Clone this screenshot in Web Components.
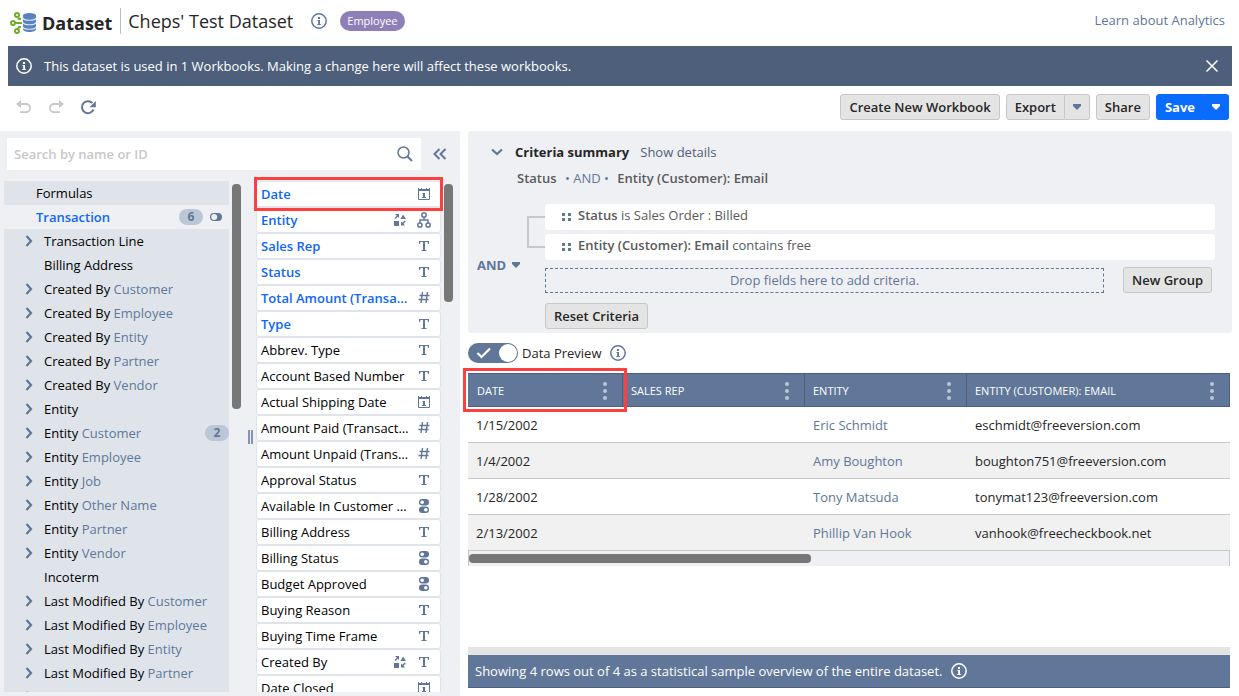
<!DOCTYPE html>
<html lang="en">
<head>
<meta charset="utf-8">
<meta name="viewport" content="width=device-width, initial-scale=1">
<title>Cheps' Test Dataset</title>
<style>
  :root {
    --slate: #607799;
    --slate-dark: #4d5f7b;
    --panel: #eff0f4;
    --tree: #dfe4eb;
    --link: #0d67f8;
    --grey: #c8c8c8;
  }
  html, body { height: 100%; }
  body {
    margin: 0;
    overflow: hidden;
    background: #fff;
    color: #262626;
    font: 13px/20px "Open Sans", "Noto Sans", sans-serif;
  }
</style>
</head>
<body>
<dataset-app></dataset-app>

<script>
const ICONS = {
  logo: [28, 24, `<g fill="none" stroke="#6fae2c" stroke-width="2"><circle cx="8" cy="4" r="2"/><circle cx="4" cy="12" r="2"/><circle cx="8" cy="20" r="2"/><path d="M9 6l1 2h2M6 12h7M9 18l1-2h2"/></g><g fill="#5b80bf"><path d="M14 4h13v14c0 2-3 3-6.500 3S14 20 14 18z"/><ellipse cx="20.500" cy="4.500" rx="6.500" ry="2.500"/></g><path d="M14 7c1 3 12 3 13 0M14 11.500c1 3 12 3 13 0M14 16c1 3 12 3 13 0" fill="none" stroke="#dbe6f7" stroke-width="1.200"/>`],
  info: [18, 18, `<circle cx="9" cy="9" r="7.200" fill="none" stroke="currentColor" stroke-width="1.500"/><path d="M8 5h2v2H8zM7.500 8H10v4h.8v1H7.300v-1h.9V9h-.7z" fill="currentColor"/>`],
  close: [14, 14, `<path d="M1.500 1.500l11 11M12.500 1.500l-11 11" fill="none" stroke="currentColor" stroke-width="1.600"/>`],
  undo: [16, 16, `<path d="M4 5h6a4 4 0 0 1 0 8.200H4" fill="none" stroke="currentColor" stroke-width="1.800"/><path d="M0 5l5-4v8z" fill="currentColor"/>`],
  redo: [16, 16, `<path d="M12 5H6a4 4 0 0 0 0 8.200h6" fill="none" stroke="currentColor" stroke-width="1.800"/><path d="M16 5l-5-4v8z" fill="currentColor"/>`],
  refresh: [16, 16, `<path d="M13.500 10.500A6 6 0 1 1 12.300 4" fill="none" stroke="currentColor" stroke-width="2"/><path d="M15.800 2v6.200H9.500z" fill="currentColor"/>`],
  caret: [8, 6, `<path d="M0 0h8v2L4 6 0 2z" fill="currentColor"/>`],
  search: [16, 16, `<circle cx="6.500" cy="6.500" r="5.500" fill="none" stroke="currentColor" stroke-width="1.500"/><path d="M10.500 10.500l4.500 4.500" stroke="currentColor" stroke-width="2"/>`],
  collapse: [14, 12, `<path d="M6.500 1l-5 5 5 5M12.500 1l-5 5 5 5" fill="none" stroke="currentColor" stroke-width="2"/>`],
  right: [8, 12, `<path d="M1.500 1l4.500 5-4.500 5" fill="none" stroke="currentColor" stroke-width="2.200"/>`],
  down: [12, 8, `<path d="M1 1.500l5 4.500 5-4.500" fill="none" stroke="currentColor" stroke-width="2.200"/>`],
  half: [12, 8, `<rect width="12" height="8" rx="4" fill="currentColor"/><circle cx="4.200" cy="4" r="3" fill="#eff0f4"/>`],
  calendar: [14, 14, `<path d="M1.500 3.500v9h11v-9" fill="none" stroke="currentColor"/><path d="M1 1h1v1h2V1h1v1h4V1h1v1h2V1h1v3H1zM6 6h2v4h1v1H5v-1h1V7H5z" fill="currentColor"/>`],
  text: [14, 14, `<path d="M2 2h10v3h-1L10.500 3H8v8h1.500v1h-5v-1H6V3H3.500L3 5H2z" fill="currentColor"/>`],
  number: [14, 14, `<path d="M5.500 1L4 12M10.500 1L9 12M2.500 4.500h10M1.500 8.500h10" fill="none" stroke="currentColor" stroke-width="1.400"/>`],
  option: [14, 14, `<rect x="2" y="0" width="10" height="6.500" rx="3.200" fill="currentColor"/><rect x="2" y="7.500" width="10" height="6.500" rx="3.200" fill="currentColor"/><circle cx="5.200" cy="3.200" r="1.800" fill="#fff"/><circle cx="8.800" cy="10.700" r="1.800" fill="#fff"/>`],
  shapes: [14, 14, `<path d="M1 8h5v5H1zM10 1.500l3 4.500H7.500zM2 1h4v4L4.700 3.700 2.500 6l-1-1 2.300-2.200zM12.800 8.500l-2.300 2.300L12 12.500H8v-4l1.400 1.300L11.700 7.500z" fill="currentColor"/>`],
  org: [14, 16, `<g fill="none" stroke="currentColor" stroke-width="1.500"><circle cx="7" cy="3" r="2.200"/><circle cx="2.900" cy="13" r="2.100"/><circle cx="11.100" cy="13" r="2.100"/><path d="M7 5v3M3 11V8h8v3"/></g>`],
  drag: [10, 10, `<path d="M1 1h3v3H1zM7 1h3v3H7zM1 6h3v3H1zM7 6h3v3H7z" fill="currentColor"/>`],
  dots: [4, 18, `<g fill="currentColor"><circle cx="2" cy="2" r="2"/><circle cx="2" cy="9" r="2"/><circle cx="2" cy="16" r="2"/></g>`],
  check: [16, 12, `<path d="M1.500 6l4 4L14 1.500" fill="none" stroke="currentColor" stroke-width="2.200"/>`],
  grip: [6, 14, `<path d="M1 0v14M4 0v14" stroke="currentColor" stroke-width="1.500"/>`]
};

class DsElement extends HTMLElement {
  connectedCallback() {
    if (!this.shadowRoot) {
      this.attachShadow({ mode: 'open' });
      this.shadowRoot.innerHTML = `<style>*, ::before { box-sizing: border-box; } ${this.css()}</style>${this.html()}`;
    }
  }
}

// <ds-icon name="...">
class DsIcon extends DsElement {
  css() { return `:host { display: inline-flex; flex: none; } svg { display: block; }`; }
  html() {
    const [w, h, body] = ICONS[this.getAttribute('name')];
    return `<svg width="${w}" height="${h}" viewBox="0 0 ${w} ${h}" aria-hidden="true">${body}</svg>`;
  }
}

// Plain button, or a split button when "split" is set
class DsButton extends DsElement {
  css() {
    return `
      :host { display: inline-flex; flex: none; }
      button {
        height: 26px; margin: 0; padding: 0 8px;
        border: 1px solid var(--grey); border-radius: 3px;
        background: #e4e4e4; color: #262626; cursor: pointer;
        font: 600 13px/20px "Open Sans", sans-serif; white-space: nowrap;
      }
      .more { display: flex; align-items: center; border-left: 0; border-radius: 0 3px 3px 0; color: var(--slate); }
      :host([split]) .main { border-radius: 3px 0 0 3px; }
      :host([primary]) button { background: #0a6cff; border-color: #0a6cff; color: #fff; font-weight: 700; }
    `;
  }
  html() {
    const more = this.hasAttribute('split')
      ? `<button class="more" type="button" aria-label="More options"><ds-icon name="caret"></ds-icon></button>` : '';
    return `<button class="main" type="button"><slot></slot></button>${more}`;
  }
}

// Red frame drawn around whatever positioned box holds it
class HighlightFrame extends DsElement {
  css() { return `:host { position: absolute; inset: var(--frame-inset, -5px -3px); z-index: 5; border: 3px solid #fc4040; pointer-events: none; }`; }
  html() { return ''; }
}

class ScrollThumb extends DsElement {
  css() {
    return `:host { display: block; flex: none; padding-top: 3px; }
      div { width: 9px; height: ${this.getAttribute('size')}px; border-radius: 4px; background: #777; }`;
  }
  html() { return `<div></div>`; }
}

class AppHeader extends DsElement {
  css() {
    return `
      :host { display: flex; flex: none; height: 46px; padding: 0 14px 0 9px; }
      .brand { display: flex; align-items: center; gap: 5px; height: 46px; font-size: 18px; font-weight: 700; }
      .title { display: flex; align-items: center; height: 42px; flex: 1; color: #262626; }
      .title::before { content: ""; width: 1px; height: 26px; margin: 0 7px 0 8px; background: #b4bfd0; }
      h1 { margin: 0 17px 0 0; font-size: 18px; font-weight: 400; }
      ds-icon { color: var(--slate); }
      .tag { margin-left: 12px; padding: 0 7px; border-radius: 10px; background: #8f7fb9; color: #fff; font-size: 11px; }
      a { line-height: 41px; color: var(--slate); text-decoration: none; }
    `;
  }
  html() {
    return `
      <div class="brand"><ds-icon name="logo"></ds-icon><span>Dataset</span></div>
      <div class="title"><h1>Cheps' Test Dataset</h1><ds-icon name="info"></ds-icon><span class="tag">Employee</span></div>
      <a href="#">Learn about Analytics</a>
    `;
  }
}

class InfoBanner extends DsElement {
  css() {
    return `
      :host { display: flex; flex: none; align-items: center; gap: 11px; height: 40px; margin: 0 7px 0 8px; padding: 0 12px 0 7px; background: var(--slate-dark); color: #fff; }
      p { flex: 1; margin: 0; }
      button { display: flex; padding: 1px; border: 0; background: none; color: inherit; }
    `;
  }
  html() {
    return `<ds-icon name="info"></ds-icon><p><slot></slot></p>
      <button type="button" aria-label="Close"><ds-icon name="close"></ds-icon></button>`;
  }
}

class ToolBar extends DsElement {
  css() {
    return `
      :host { display: flex; flex: none; align-items: center; gap: 6px; height: 45px; padding: 0 10px 4px 16px; }
      .history { display: flex; flex: 1; gap: 16px; }
      .history button { display: flex; padding: 0; border: 0; background: none; color: var(--slate); }
      .history button:disabled { color: var(--grey); }
    `;
  }
  html() {
    return `
      <div class="history">
        <button type="button" disabled aria-label="Undo"><ds-icon name="undo"></ds-icon></button>
        <button type="button" disabled aria-label="Redo"><ds-icon name="redo"></ds-icon></button>
        <button type="button" aria-label="Refresh"><ds-icon name="refresh"></ds-icon></button>
      </div>
      <ds-button>Create New Workbook</ds-button>
      <ds-button split>Export</ds-button>
      <ds-button>Share</ds-button>
      <ds-button split primary>Save</ds-button>
    `;
  }
}

class SearchBox extends DsElement {
  css() {
    return `
      :host { display: flex; align-items: center; height: 32px; }
      label { display: flex; flex: 1; align-items: center; height: 32px; padding: 0 8px 0 7px; background: #fff; color: var(--slate); }
      input { flex: 1; min-width: 0; padding: 0; border: 0; outline: 0; background: none; color: #262626; font: 13px/20px "Open Sans", sans-serif; }
      input::placeholder { color: var(--grey); font-weight: 600; }
      button { display: flex; padding: 0; margin: 0 13px 0 12px; border: 0; background: none; color: var(--slate); }
    `;
  }
  html() {
    return `
      <label><input type="text" placeholder="Search by name or ID" aria-label="Search by name or ID"><ds-icon name="search"></ds-icon></label>
      <button type="button" aria-label="Collapse panel"><ds-icon name="collapse"></ds-icon></button>
    `;
  }
}

// One record type: attributes label, via, count, branch, root, active
class TreeRow extends DsElement {
  css() {
    return `
      :host { display: flex; align-items: center; height: 24px; padding-left: 21px; background: var(--tree); color: #000; white-space: nowrap; }
      :host([active]) { background: var(--panel); color: var(--link); }
      :host([active]) .name { font-weight: 600; }
      .twist { display: flex; width: 19px; color: var(--slate); }
      :host([root]) .twist { width: 11px; }
      .name { flex: 1; }
      .via { color: var(--slate); }
      .count { width: 24px; border-radius: 8px; background: #bcc7d6; color: var(--slate); font-size: 12px; font-weight: 700; line-height: 16px; text-align: center; }
      .only { display: flex; padding: 0 7px; color: var(--slate); }
    `;
  }
  html() {
    const at = name => this.getAttribute(name);
    return `
      <span class="twist">${this.hasAttribute('branch') ? '<ds-icon name="right"></ds-icon>' : ''}</span>
      <span class="name">${at('label')}${at('via') ? ` <span class="via">${at('via')}</span>` : ''}</span>
      ${at('count') ? `<span class="count">${at('count')}</span>` : ''}
      ${this.hasAttribute('active') ? '<span class="only"><ds-icon name="half"></ds-icon></span>' : ''}
    `;
  }
}

class RecordTree extends DsElement {
  css() { return `:host { display: block; flex: 1; min-width: 0; overflow: hidden; background: var(--tree); }`; }
  html() {
    const rows = [
      ['Transaction Line'], ['Billing Address', '', 'leaf'],
      ['Created By', 'Customer'], ['Created By', 'Employee'], ['Created By', 'Entity'],
      ['Created By', 'Partner'], ['Created By', 'Vendor'],
      ['Entity'], ['Entity', 'Customer', '', 2], ['Entity', 'Employee'], ['Entity', 'Job'],
      ['Entity', 'Other Name'], ['Entity', 'Partner'], ['Entity', 'Vendor'],
      ['Incoterm', '', 'leaf'],
      ['Last Modified By', 'Customer'], ['Last Modified By', 'Employee'], ['Last Modified By', 'Entity'],
      ['Last Modified By', 'Partner']
    ];
    return `
      <tree-row root label="Formulas"></tree-row>
      <tree-row root active label="Transaction" count="6"></tree-row>
      ${rows.map(([label, via = '', leaf = '', count = '']) =>
        `<tree-row label="${label}" via="${via}" count="${count}" ${leaf ? '' : 'branch'}></tree-row>`).join('')}
      <tree-row label="" branch></tree-row>
    `;
  }
}

class FieldRow extends DsElement {
  css() {
    return `
      :host { position: relative; display: flex; align-items: center; height: 26px; padding: 0 9px 0 4px; border: 1px solid var(--tree); border-radius: 3px; background: #fff; color: #000; }
      :host([used]) { color: var(--link); }
      :host([used]) .name { font-weight: 600; }
      .name { flex: 0 1 148px; overflow: hidden; text-overflow: ellipsis; white-space: nowrap; }
      .types { display: flex; flex: 1 0 auto; justify-content: flex-end; align-items: center; gap: 10px; color: var(--slate); }
    `;
  }
  html() {
    const icons = this.getAttribute('types').split(' ').map(t => `<ds-icon name="${t}"></ds-icon>`).join('');
    return `<span class="name">${this.getAttribute('label')}</span><span class="types">${icons}</span><slot></slot>`;
  }
}

class FieldList extends DsElement {
  css() {
    return `
      :host { display: block; flex: none; width: 185px; }
      /* room for the frame that sticks out of the first row */
      .clip { height: 100%; margin: -6px; padding: 6px 6px 0; box-sizing: content-box; overflow: hidden; }
    `;
  }
  html() {
    const fields = [
      ['Date', 'calendar', 1], ['Entity', 'shapes org', 1], ['Sales Rep', 'text', 1], ['Status', 'text', 1],
      ['Total Amount (Transaction)', 'number', 1], ['Type', 'text', 1],
      ['Abbrev. Type', 'text'], ['Account Based Number', 'text'], ['Actual Shipping Date', 'calendar'],
      ['Amount Paid (Transaction)', 'number'], ['Amount Unpaid (Transaction)', 'number'],
      ['Approval Status', 'text'], ['Available In Customer Center', 'option'], ['Billing Address', 'text'],
      ['Billing Status', 'option'], ['Budget Approved', 'option'], ['Buying Reason', 'text'],
      ['Buying Time Frame', 'text'], ['Created By', 'shapes text'], ['Date Closed', 'calendar']
    ];
    return `<div class="clip">${fields.map(([label, types, used], i) =>
      `<field-row label="${label}" types="${types}" ${used ? 'used' : ''}>${i ? '' : '<highlight-frame></highlight-frame>'}</field-row>`).join('')}</div>`;
  }
}

class FieldPanel extends DsElement {
  css() {
    return `
      :host { display: flex; flex-direction: column; min-height: 0; gap: 11px; padding: 7px 0 4px; background: var(--panel); }
      search-box { padding-left: 7px; }
      .lists { display: flex; flex: 1; min-height: 0; padding: 0 7px 0 4px; }
      .lists scroll-thumb { margin-left: 3px; }
      .splitter { display: flex; align-items: center; width: 15px; padding-left: 7px; color: var(--slate); }
    `;
  }
  html() {
    return `
      <search-box></search-box>
      <div class="lists">
        <record-tree></record-tree><scroll-thumb size="225"></scroll-thumb>
        <div class="splitter"><ds-icon name="grip"></ds-icon></div>
        <field-list></field-list><scroll-thumb size="118"></scroll-thumb>
      </div>
    `;
  }
}

class CriteriaRule extends DsElement {
  css() {
    return `
      :host { display: flex; align-items: center; gap: 7px; height: 26px; padding: 0 16px 4px; border-radius: 3px; background: #fff; color: #5a5a5a; }
      ds-icon { color: var(--slate); padding-top: 4px; }
    `;
  }
  html() { return `<ds-icon name="drag"></ds-icon><span><slot></slot></span>`; }
}

class CriteriaPanel extends DsElement {
  css() {
    return `
      :host { display: block; padding: 11px 17px 4px 9px; border-radius: 3px; background: var(--panel); }
      .head { display: flex; align-items: center; padding-left: 14px; }
      .head button { display: flex; margin-right: 12px; padding: 0; border: 0; background: none; color: var(--slate); }
      h2 { margin: 0 11px 0 0; font-size: 13px; font-weight: 700; }
      a { color: var(--slate-dark); text-decoration: none; }
      .summary { margin: 6px 0 16px; padding-left: 40px; color: #5a5a5a; font-weight: 600; }
      .summary span { margin: 0 5px; color: var(--slate); font-weight: 400; }
      .body { display: flex; }
      .op { position: relative; display: flex; align-self: center; align-items: center; width: 50px; padding-bottom: 4px; color: var(--slate); }
      select { appearance: none; width: 50px; padding: 0; border: 0; background: none; color: inherit; font: 700 13px/20px "Open Sans", sans-serif; }
      .op ds-icon { position: absolute; right: 7px; pointer-events: none; }
      .bracket { width: 18px; height: 32px; margin-top: 12px; border: 2px solid var(--grey); border-right: 0; }
      .rules { display: flex; flex: 1; flex-direction: column; gap: 4px; min-width: 0; }
      .drop { display: flex; align-items: center; gap: 19px; padding: 3px 3px 6px 0; }
      .zone { flex: 1; height: 25px; border: 1px dashed var(--slate); color: var(--slate); line-height: 23px; text-align: center; }
      b { font-weight: 600; }
    `;
  }
  html() {
    return `
      <div class="head">
        <button type="button" aria-label="Collapse criteria"><ds-icon name="down"></ds-icon></button>
        <h2>Criteria summary</h2><a href="#">Show details</a>
      </div>
      <p class="summary">Status <span>• AND •</span> Entity (Customer): Email</p>
      <div class="body">
        <div class="op">
          <select aria-label="Operator"><option>AND</option><option>OR</option></select>
          <ds-icon name="caret"></ds-icon>
        </div>
        <div class="bracket"></div>
        <div class="rules">
          <criteria-rule><b>Status</b> is Sales Order : Billed</criteria-rule>
          <criteria-rule><b>Entity (Customer): Email</b> contains free</criteria-rule>
          <div class="drop"><div class="zone">Drop fields here to add criteria.</div><ds-button>New Group</ds-button></div>
          <ds-button>Reset Criteria</ds-button>
        </div>
      </div>
    `;
  }
}

class PreviewToggle extends DsElement {
  css() {
    return `
      :host { display: flex; align-items: center; height: 40px; color: #262626; }
      label { display: flex; align-items: center; gap: 4px; margin-right: 8px; }
      .switch { position: relative; display: flex; align-items: center; width: 50px; height: 20px; padding-left: 8px; border-radius: 10px; background: var(--slate); color: #fff; }
      .switch::before { content: ""; position: absolute; right: 1px; width: 18px; height: 18px; border-radius: 9px; background: #fff; }
      input { position: absolute; inset: 0; width: 100%; height: 100%; margin: 0; opacity: 0; }
      ds-icon { color: inherit; }
      .info { color: var(--slate); }
    `;
  }
  html() {
    return `
      <label><span class="switch"><input type="checkbox" checked><ds-icon name="check"></ds-icon></span>Data Preview</label>
      <ds-icon class="info" name="info"></ds-icon>
    `;
  }
}

class PreviewTable extends DsElement {
  css() {
    return `
      :host { display: block; }
      table { width: 100%; border-collapse: separate; border-spacing: 0; table-layout: fixed; }
      th { --frame-inset: -6px -5px; position: relative; height: 34px; padding: 1px 15px 0 8px; border: 1px solid var(--slate-dark); border-left: 0; background: var(--slate); color: #fff; font-size: 11px; font-weight: 500; text-align: left; text-transform: uppercase; }
      th:first-child { padding-left: 9px; }
      .cell { display: flex; align-items: center; justify-content: space-between; white-space: nowrap; }
      .cell button { display: flex; padding: 0; border: 0; background: none; color: #bcc7d6; }
      td { height: 36px; padding: 0 8px; border-bottom: 1px solid var(--grey); overflow: hidden; white-space: nowrap; }
      tr:nth-child(even) td { background: #f1f1f1; }
      a { color: var(--slate); text-decoration: none; }
      .track { height: 15px; padding: 3px 0; border: solid var(--grey); border-width: 0 1px; background: var(--panel); }
      .track div { width: 45%; height: 9px; border-radius: 4px; background: #777; }
    `;
  }
  html() {
    const heads = ['Date', 'Sales Rep', 'Entity', 'Entity (Customer): Email'];
    const rows = [
      ['1/15/2002', 'Eric Schmidt', 'eschmidt@freeversion.com'],
      ['1/4/2002', 'Amy Boughton', 'boughton751@freeversion.com'],
      ['1/28/2002', 'Tony Matsuda', 'tonymat123@freeversion.com'],
      ['2/13/2002', 'Phillip Van Hook', 'vanhook@freecheckbook.net']
    ];
    return `
      <table>
        <colgroup><col style="width:155px"><col style="width:182px"><col style="width:162px"><col></colgroup>
        <thead><tr>${heads.map((h, i) => `<th scope="col"><div class="cell">${h}<button type="button" aria-label="${h} menu"><ds-icon name="dots"></ds-icon></button></div>${i ? '' : '<highlight-frame></highlight-frame>'}</th>`).join('')}</tr></thead>
        <tbody>${rows.map(([date, name, mail]) => `<tr><td>${date}</td><td></td><td><a href="#">${name}</a></td><td>${mail}</td></tr>`).join('')}</tbody>
      </table>
      <div class="track"><div></div></div>
    `;
  }
}

class StatusBar extends DsElement {
  css() {
    return `:host { display: flex; align-items: center; gap: 8px; height: 41px; padding: 0 7px; border-top: 8px solid #e4e4e4; border-bottom: 1px solid var(--slate-dark); box-sizing: border-box; background: var(--slate); color: #fff; }`;
  }
  html() { return `<slot></slot><ds-icon name="info"></ds-icon>`; }
}

class DatasetApp extends DsElement {
  css() {
    return `
      :host { display: flex; flex-direction: column; height: 100vh; overflow: hidden; }
      main { display: grid; grid-template-columns: 460px minmax(0, 1fr); grid-template-rows: minmax(0, 1fr); flex: 1; min-height: 0; gap: 8px; }
      .work { display: flex; flex-direction: column; padding: 0 7px 8px 0; }
      .preview { display: flex; flex: 1; flex-direction: column; padding-right: 2px; }
      status-bar { margin-top: auto; }
    `;
  }
  html() {
    return `
      <app-header></app-header>
      <info-banner>This dataset is used in 1 Workbooks. Making a change here will affect these workbooks.</info-banner>
      <tool-bar></tool-bar>
      <main>
        <field-panel></field-panel>
        <div class="work">
          <criteria-panel></criteria-panel>
          <div class="preview">
            <preview-toggle></preview-toggle>
            <preview-table></preview-table>
            <status-bar>Showing 4 rows out of 4 as a statistical sample overview of the entire dataset.</status-bar>
          </div>
        </div>
      </main>
    `;
  }
}

customElements.define('ds-icon', DsIcon);
customElements.define('ds-button', DsButton);
customElements.define('highlight-frame', HighlightFrame);
customElements.define('scroll-thumb', ScrollThumb);
customElements.define('app-header', AppHeader);
customElements.define('info-banner', InfoBanner);
customElements.define('tool-bar', ToolBar);
customElements.define('search-box', SearchBox);
customElements.define('tree-row', TreeRow);
customElements.define('record-tree', RecordTree);
customElements.define('field-row', FieldRow);
customElements.define('field-list', FieldList);
customElements.define('field-panel', FieldPanel);
customElements.define('criteria-rule', CriteriaRule);
customElements.define('criteria-panel', CriteriaPanel);
customElements.define('preview-toggle', PreviewToggle);
customElements.define('preview-table', PreviewTable);
customElements.define('status-bar', StatusBar);
customElements.define('dataset-app', DatasetApp);
</script>
</body>
</html>
